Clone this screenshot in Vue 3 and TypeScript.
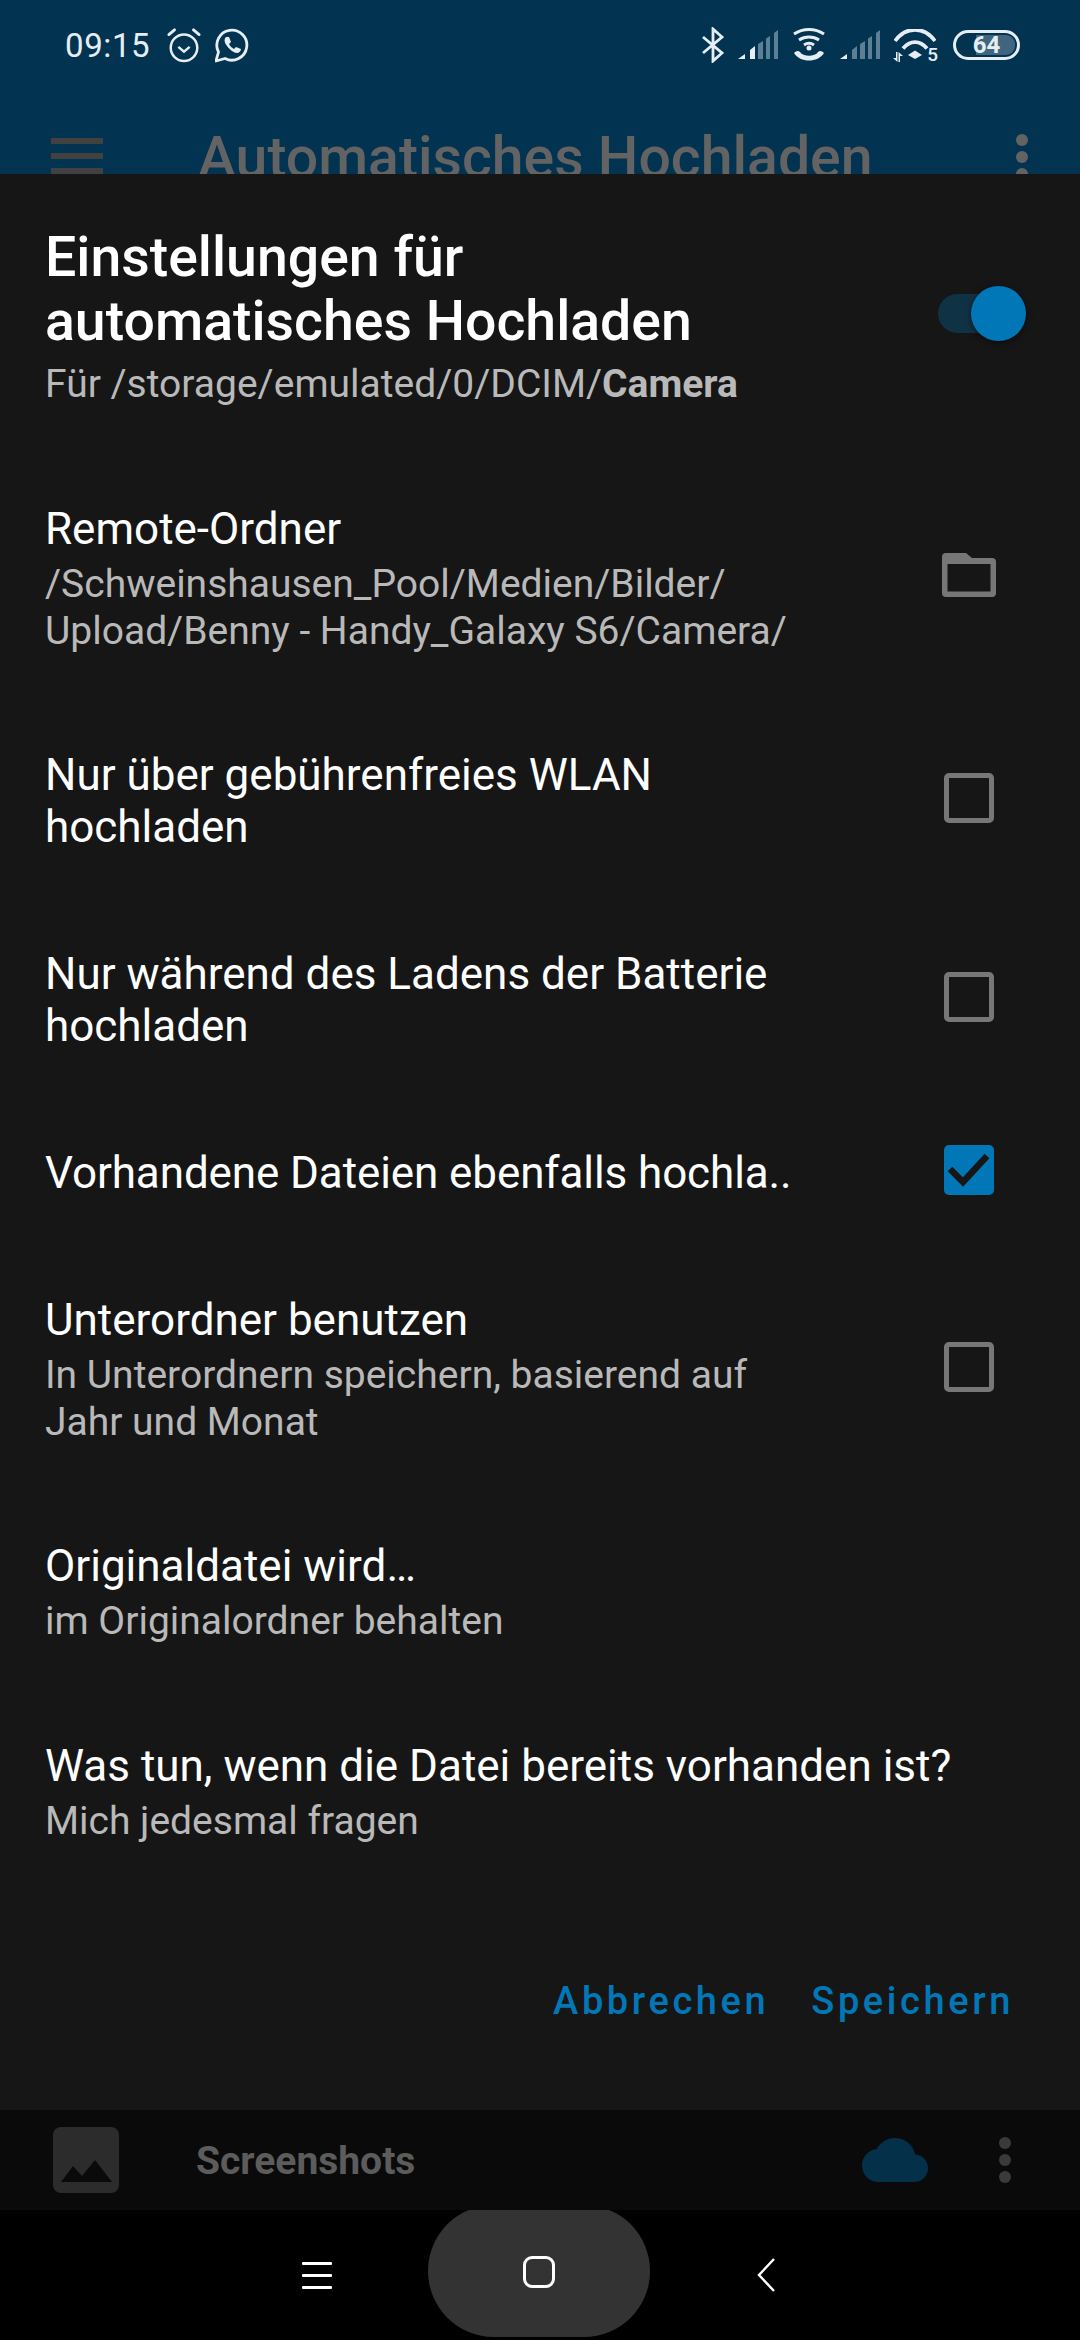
<template>
  <div class="screen">
    <header class="appbar">
      <div class="status">
        <span class="time">09:15</span>
        <svg class="st-icon" width="36" height="36" viewBox="0 0 38 38" fill="none" stroke="#e6eef3" stroke-width="2.600">
          <circle cx="19" cy="22" r="14" />
          <path d="M13 21l6 5 6-5" />
          <path d="M3 8l6-5M35 8l-6-5" stroke-linecap="round" stroke-width="3" />
        </svg>
        <svg class="st-icon wa" width="34" height="36" viewBox="0 0 34 36" fill="none">
          <path d="M1 34l2.500-9A15 15 0 1 1 10 31.500z" stroke="#e6eef3" stroke-width="2.800" stroke-linejoin="round" />
          <path d="M11 10c-2 2-2 5 1 9s7 7 10 7c2 0 4-2 4-4l-5-2-2 2c-2-1-4-3-5-5l2-2-2-5z" fill="#e6eef3" />
        </svg>
        <div class="st-right">
          <svg width="22" height="36" viewBox="0 0 22 36" fill="none" stroke="#e6eef3" stroke-width="2.800">
            <path d="M1 10l19 16-9 8V2l9 8L1 26" />
          </svg>
          <svg class="bars" width="40" height="30" viewBox="0 0 40 30">
            <path d="M0 29l7-5v5z" fill="#e6eef3" />
            <path d="M12 20l5-4v13h-5z" fill="#e6eef3" />
            <path d="M20 14l5-3v18h-5zM28 8.500l4-2.500v23h-4zM36 3l4-3v29h-4z" fill="#5c7f95" />
          </svg>
          <svg width="34" height="34" viewBox="0 0 34 34" fill="none" stroke="#e6eef3" stroke-width="3">
            <path d="M2 6c9-6 21-6 30 0M7 12c6-4 14-4 20 0M12 17c3-2 7-2 10 0" />
            <circle cx="17" cy="20" r="2.500" fill="#e6eef3" stroke="none" />
            <path d="M2 25c2-2 4-3 6-1 3 5 15 5 18 0 2-2 4-1 6 1-6 10-24 10-30 0z" fill="#e6eef3" stroke="none" />
          </svg>
          <svg class="bars" width="40" height="30" viewBox="0 0 40 30">
            <path d="M0 29l7-5v5z" fill="#e6eef3" />
            <path d="M12 20l5-4v13h-5zM20 14l5-3v18h-5zM28 8.500l4-2.500v23h-4zM36 3l4-3v29h-4z" fill="#5c7f95" />
          </svg>
          <div class="wifi5">
            <svg class="wifi-arcs" width="42" height="30" viewBox="0 0 42 30" fill="none" stroke="#e6eef3" stroke-width="3.800">
              <path d="M1 12C12 -3 30 -3 41 12M9 19.500c7-8.500 17-8.500 24 0" />
              <path d="M14 26l7-4.500 7 4.500-7 4z" fill="#e6eef3" stroke="none" />
            </svg>
            <span class="five">5</span>
            <svg class="updown" width="10" height="10" viewBox="0 0 10 10" fill="#e6eef3">
              <path d="M3 0h1.500v10L0 6h3zM5.500 0L10 4H7v6H5.500z" />
            </svg>
          </div>
          <div class="batt">
            <div class="batt-fill"></div>
            <span>64</span>
          </div>
        </div>
      </div>
      <div class="toolbar">
        <div class="burger"><i></i><i></i><i></i></div>
        <span class="bar-title">Automatisches Hochladen</span>
        <div class="kebab"><i></i><i></i><i></i></div>
      </div>
    </header>

    <main class="dialog">
      <div class="head">
        <div class="head-text">
          <h1>Einstellungen für<br />automatisches Hochladen</h1>
          <p class="path">Für /storage/emulated/0/DCIM/<b>Camera</b></p>
        </div>
        <div class="switch"><div class="track"></div><div class="knob"></div></div>
      </div>

      <section v-for="row in rows" :key="row.key" class="row" :class="row.key">
        <div class="row-text">
          <div class="label" v-html="row.label"></div>
          <div v-if="row.sub" class="sub" v-html="row.sub"></div>
        </div>
        <div v-if="row.control" class="control">
          <svg v-if="row.control === 'folder'" width="54" height="44" viewBox="0 0 54 44">
            <path
              d="M4 0h20l6 5h20a4 4 0 0 1 4 4v31a4 4 0 0 1-4 4H4a4 4 0 0 1-4-4V4a4 4 0 0 1 4-4zM5.500 11v27.500h43V11z"
              fill="#777"
              fill-rule="evenodd"
            />
          </svg>
          <div v-else-if="row.control === 'off'" class="check"></div>
          <svg v-else width="50" height="50" viewBox="0 0 50 50">
            <rect width="50" height="50" rx="5" fill="#0277b8" />
            <path d="M6 24l13 13L43 11" fill="none" stroke="#161616" stroke-width="6.500" />
          </svg>
        </div>
      </section>

      <div class="actions">
        <span>Abbrechen</span>
        <span>Speichern</span>
      </div>
    </main>

    <div class="folder-row">
      <svg class="thumb" width="66" height="66" viewBox="0 0 66 66">
        <rect width="66" height="66" rx="8" fill="#2c2c2c" />
        <path d="M8 55l12-16 9 10 13-16 17 22z" fill="#0a0a0a" />
      </svg>
      <span class="folder-name">Screenshots</span>
      <svg class="cloud" width="66" height="44" viewBox="0 4 24 16">
        <path
          d="M19.350 10.040C18.670 6.590 15.640 4 12 4 9.110 4 6.600 5.640 5.350 8.040 2.340 8.360 0 10.910 0 14c0 3.310 2.690 6 6 6h13c2.760 0 5-2.240 5-5 0-2.640-2.050-4.780-4.650-4.960z"
          fill="#04304a"
        />
      </svg>
      <div class="kebab dim"><i></i><i></i><i></i></div>
    </div>

    <nav class="navbar">
      <div class="nav-menu"><i></i><i></i><i></i></div>
      <div class="home"><div class="home-square"></div></div>
      <svg class="back" width="20" height="34" viewBox="0 0 20 34" fill="none" stroke="#fff" stroke-width="2.400">
        <path d="M18 1L3 17l15 16" />
      </svg>
    </nav>
  </div>
</template>

<script setup lang="ts">
interface Row {
  key: string;
  label: string;
  sub?: string;
  control?: "folder" | "off" | "on";
}

const rows: Row[] = [
  {
    key: "remote",
    label: "Remote-Ordner",
    sub: "/Schweinshausen_Pool/Medien/Bilder/<br>Upload/Benny - Handy_Galaxy S6/Camera/",
    control: "folder",
  },
  { key: "wlan", label: "Nur über gebührenfreies WLAN<br>hochladen", control: "off" },
  { key: "charging", label: "Nur während des Ladens der Batterie<br>hochladen", control: "off" },
  { key: "existing", label: "Vorhandene Dateien ebenfalls hochla..", control: "on" },
  {
    key: "subfolders",
    label: "Unterordner benutzen",
    sub: "In Unterordnern speichern, basierend auf<br>Jahr und Monat",
    control: "off",
  },
  { key: "original", label: "Originaldatei wird…", sub: "im Originalordner behalten" },
  { key: "conflict", label: "Was tun, wenn die Datei bereits vorhanden ist?", sub: "Mich jedesmal fragen" },
];
</script>

<style>
html,
body {
  margin: 0;
  background: #000;
}
</style>

<style scoped>
.screen {
  width: 1080px;
  height: 2340px;
  display: flex;
  flex-direction: column;
  overflow: hidden;
  font-family: Roboto, "Noto Sans", sans-serif;
  background: #000;
}

.appbar {
  height: 174px;
  flex: none;
  background: #023451;
  overflow: hidden;
}
.status {
  height: 90px;
  display: flex;
  align-items: center;
  padding: 0 60px 0 65px;
  color: #e6eef3;
}
.time {
  font-size: 33px;
  letter-spacing: 0.6px;
  margin-right: 16px;
}
.wa {
  margin-left: 13px;
}
.st-right {
  margin-left: auto;
  display: flex;
  align-items: center;
  gap: 14px;
}
.wifi5 {
  position: relative;
  width: 42px;
  height: 36px;
  margin-right: 3px;
}
.wifi-arcs {
  display: block;
  margin-top: 2px;
}
.five {
  position: absolute;
  right: -2px;
  bottom: -1px;
  font-size: 19px;
  line-height: 18px;
  font-weight: 500;
}
.updown {
  position: absolute;
  left: -1px;
  bottom: 1px;
}
.batt {
  position: relative;
  width: 67px;
  height: 30px;
  box-sizing: border-box;
  border: 3px solid #e6eef3;
  border-radius: 15px;
  display: flex;
  align-items: center;
  justify-content: center;
  overflow: hidden;
}
.batt-fill {
  position: absolute;
  right: 2px;
  top: 2px;
  bottom: 2px;
  width: 64%;
  background: #40667f;
  border-radius: 0 9px 9px 0;
}
.batt span {
  position: relative;
  font-size: 24px;
  font-weight: 700;
  line-height: 1;
}

.toolbar {
  display: flex;
  align-items: flex-start;
  padding: 48px 52px 0 51px;
}
.burger {
  width: 52px;
}
.burger i {
  display: block;
  height: 6px;
  background: #414141;
  margin-bottom: 9px;
}
.bar-title {
  margin-left: 95px;
  font-size: 57.200px;
  font-weight: 500;
  line-height: 40px;
  color: #636363;
  white-space: nowrap;
}
.kebab {
  margin-left: auto;
  width: 12px;
  display: flex;
  flex-direction: column;
  gap: 5px;
}
.toolbar .kebab {
  margin-top: -4px;
}
.kebab i {
  display: block;
  width: 12px;
  height: 12px;
  border-radius: 50%;
  background: #636363;
}

.dialog {
  height: 1936px;
  flex: none;
  box-sizing: border-box;
  background: #161616;
  padding: 0 45px;
  display: flex;
  flex-direction: column;
}
.head {
  display: flex;
  align-items: center;
  padding-top: 52px;
}
.head-text {
  flex: 1;
}
h1 {
  margin: 0;
  font-size: 55.400px;
  line-height: 64px;
  font-weight: 500;
  color: #fff;
}
.path {
  margin: 6px 0 0;
  font-size: 39px;
  line-height: 48px;
  color: #b9b9b9;
}
.path b {
  font-weight: 700;
}
.switch {
  position: relative;
  width: 88px;
  height: 56px;
  margin: -6px 9px 0 0;
}
.track {
  position: absolute;
  left: 0;
  top: 8px;
  height: 39px;
  width: 84px;
  border-radius: 20px;
  background: #103245;
}
.knob {
  position: absolute;
  right: 0;
  top: 0;
  width: 55px;
  height: 55px;
  border-radius: 50%;
  background: #0277b8;
  box-shadow: 0 2px 6px rgba(0, 0, 0, 0.5);
}

.row {
  display: flex;
  align-items: center;
}
.row-text {
  flex: 1;
  min-width: 0;
}
.label {
  font-size: 44px;
  line-height: 52px;
  color: #fff;
  white-space: nowrap;
}
.existing .label {
  letter-spacing: -0.1px;
}
.sub {
  font-size: 39px;
  line-height: 47px;
  color: #b9b9b9;
  white-space: nowrap;
  margin-top: 6px;
}
.control {
  width: 56px;
  flex: none;
  display: flex;
  justify-content: center;
  margin: -6px 38px 0 0;
}
.remote .control {
  margin-top: -9px;
}
.check {
  width: 50px;
  height: 50px;
  box-sizing: border-box;
  border: 5px solid #777;
  border-radius: 5px;
}
.remote,
.wlan,
.charging,
.existing,
.subfolders,
.conflict {
  margin-top: 95px;
}
.row.wlan {
  margin-top: 94px;
}
.original {
  margin-top: 94px;
}

.actions {
  margin-top: auto;
  margin-bottom: 86px;
  display: flex;
  justify-content: flex-end;
  gap: 42px;
  padding-right: 21px;
  font-size: 38px;
  font-weight: 500;
  letter-spacing: 3.600px;
  line-height: 46px;
  color: #0277b8;
}

.folder-row {
  position: relative;
  z-index: 1;
  height: 100px;
  flex: none;
  background: #0a0a0a;
  display: flex;
  align-items: center;
  padding: 0 69px 0 53px;
}
.folder-name {
  margin-left: 77px;
  margin-top: 2px;
  font-size: 39px;
  font-weight: 700;
  color: #5c5c5c;
}
.cloud {
  margin-left: auto;
}
.folder-row .kebab {
  margin-left: 71px;
}
.kebab.dim i {
  background: #3a3a3a;
}

.navbar {
  height: 130px;
  flex: none;
  background: #000;
  display: flex;
  align-items: center;
  padding-left: 302px;
}
.nav-menu {
  width: 30px;
  display: flex;
  flex-direction: column;
  gap: 9px;
}
.nav-menu i {
  display: block;
  height: 3px;
  border-radius: 1px;
  background: #fff;
}
.home {
  flex: none;
  width: 222px;
  height: 132px;
  margin: 0 0 8px 96px;
  border-radius: 66px;
  background: #333;
  display: flex;
  align-items: center;
  justify-content: center;
}
.home-square {
  width: 32px;
  height: 32px;
  box-sizing: border-box;
  border: 3.500px solid #fff;
  border-radius: 9px;
  margin-top: 2px;
}
.back {
  margin-left: 106px;
}
</style>
